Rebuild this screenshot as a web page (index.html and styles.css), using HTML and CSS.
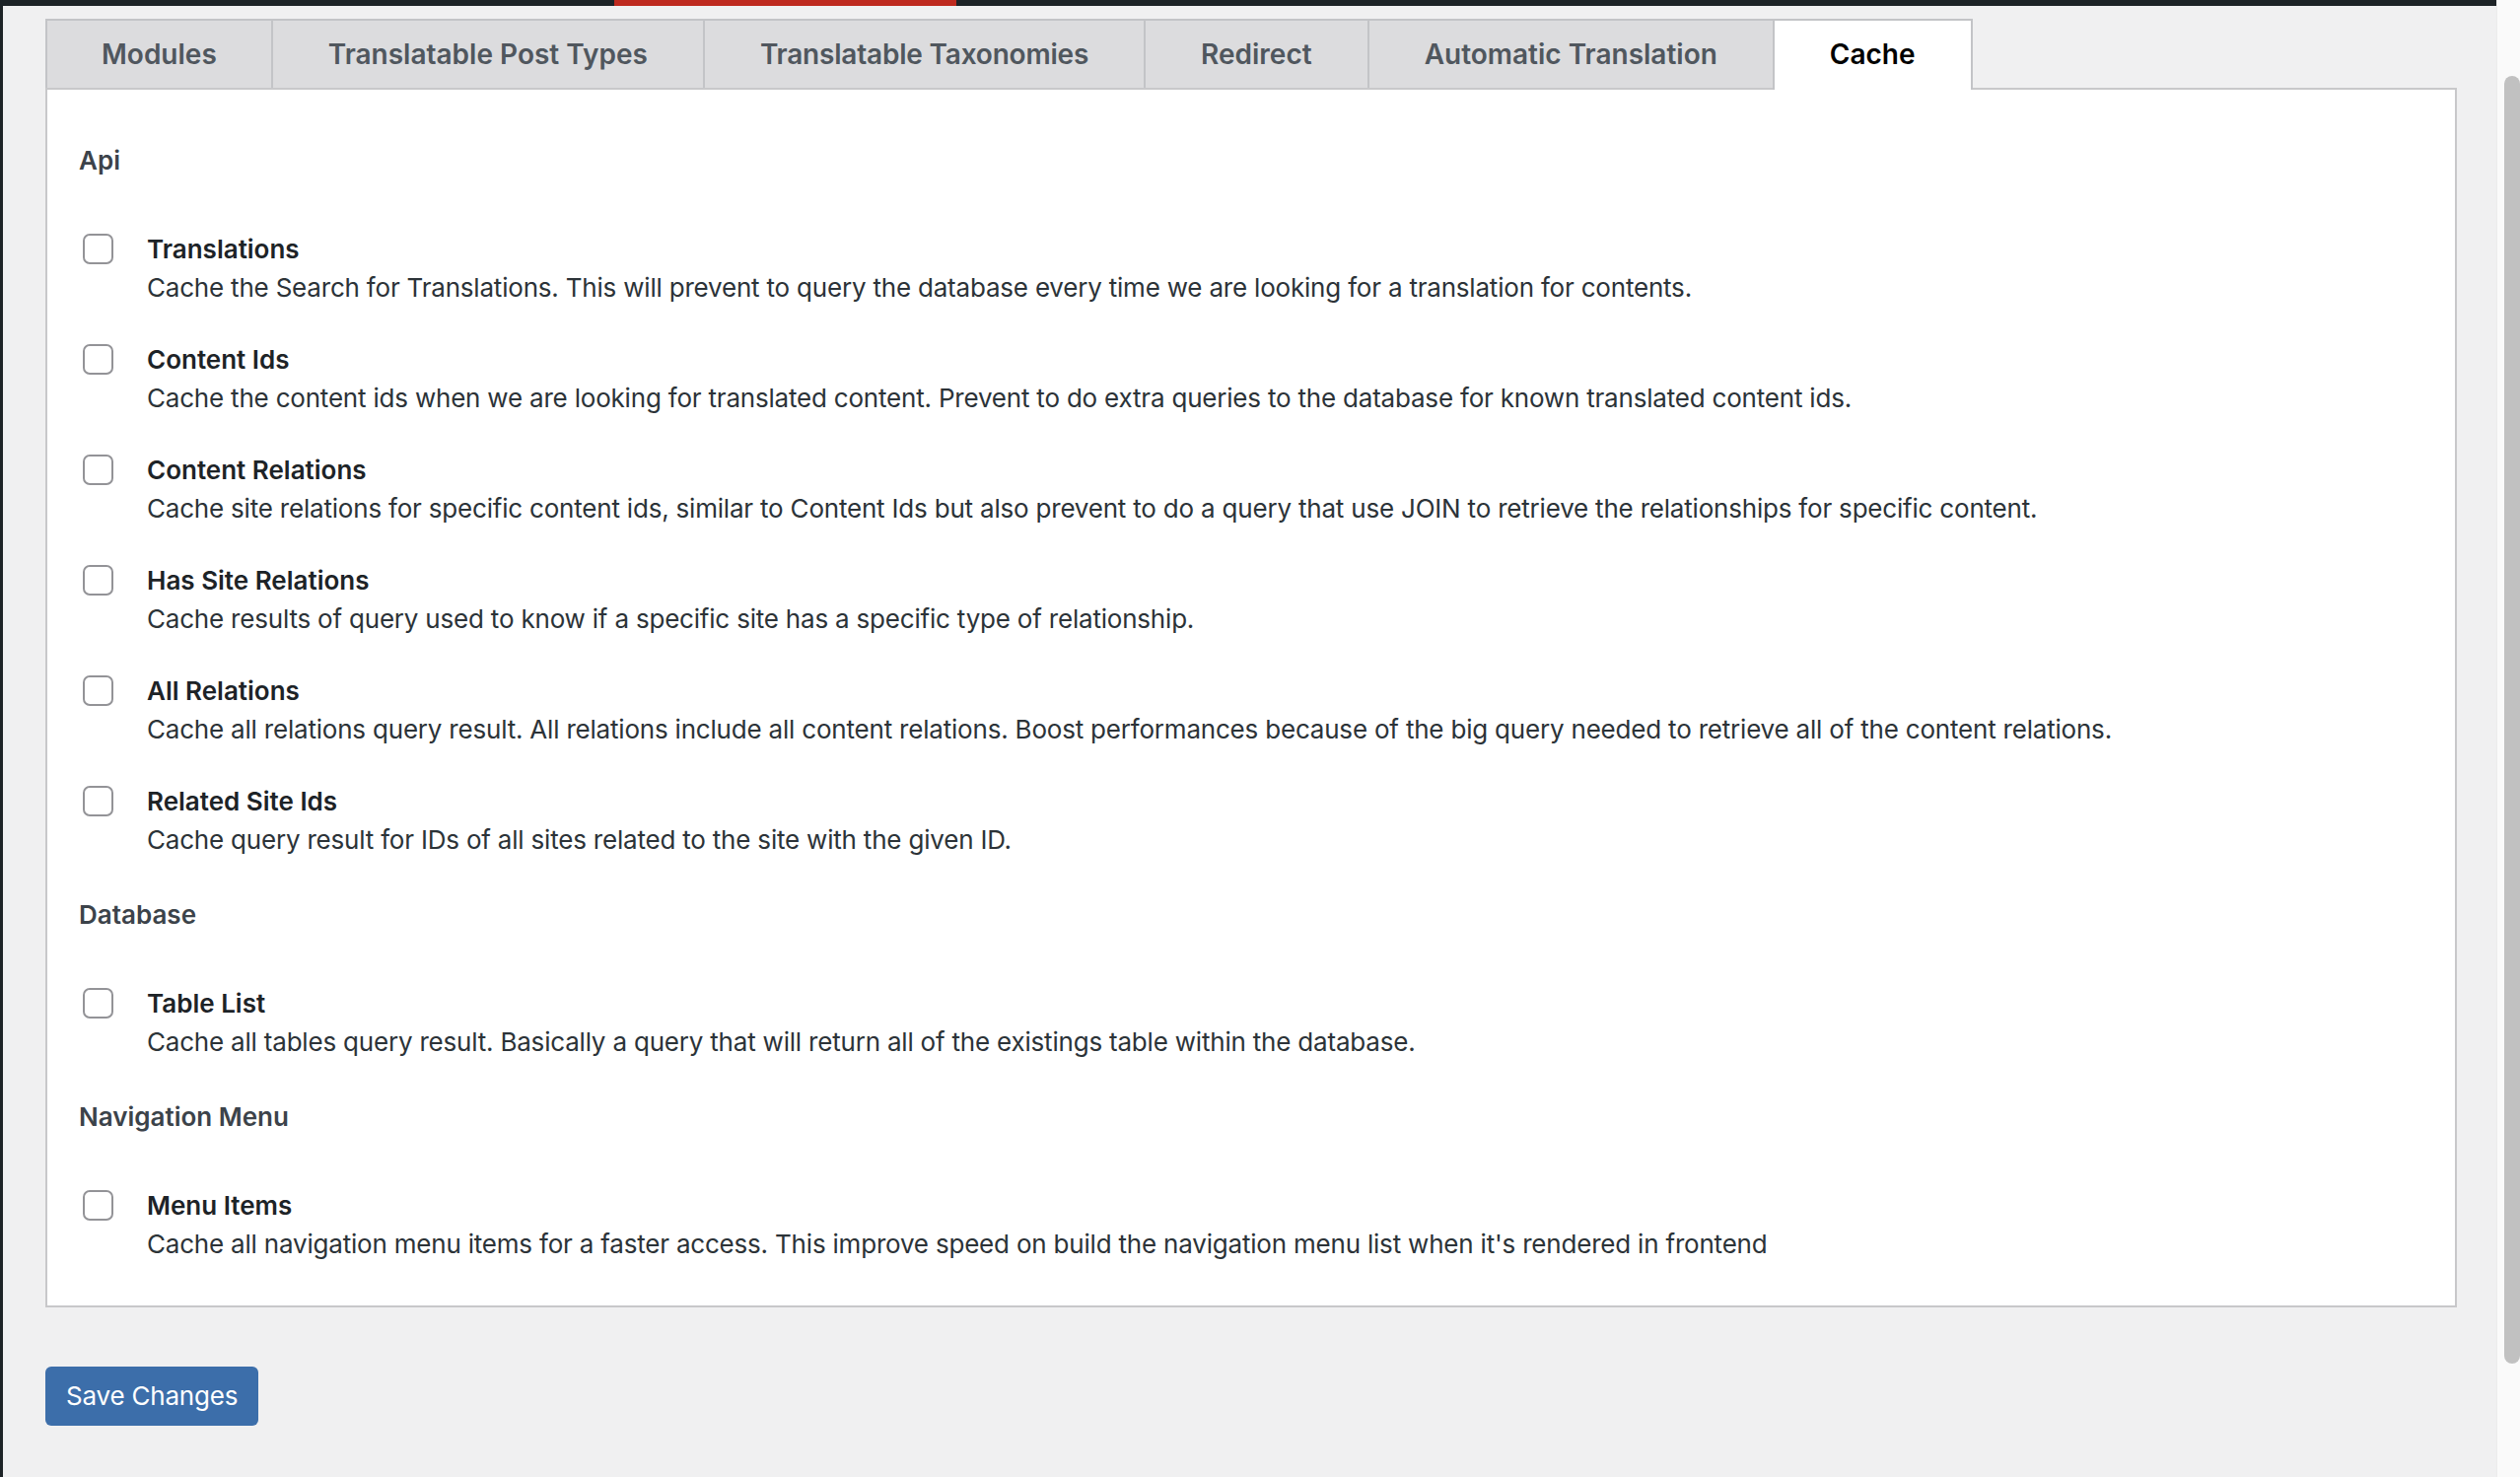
FILE: index.html
```html
<!DOCTYPE html>
<html lang="en">
<head>
<meta charset="utf-8">
<title>Cache Settings</title>
<link rel="stylesheet" href="styles.css">
</head>
<body>
<div class="app">
  <div class="adminbar"><div class="adminbar-active"></div></div>
  <div class="workspace">
    <div class="sidebar-edge"></div>
    <main class="content">
      <nav class="tabs">
        <a class="tab tab-first">Modules</a>
        <a class="tab">Translatable Post Types</a>
        <a class="tab tab-narrow">Translatable Taxonomies</a>
        <a class="tab">Redirect</a>
        <a class="tab">Automatic Translation</a>
        <a class="tab tab-active">Cache</a>
      </nav>
      <section class="panel">
        <div class="group">
          <h3 class="group-title">Api</h3>
          <label class="option">
            <input type="checkbox" class="check">
            <span class="option-text">
              <span class="option-name">Translations</span>
              <span class="option-desc">Cache the Search for Translations. This will prevent to query the database every time we are looking for a translation for contents.</span>
            </span>
          </label>
          <label class="option">
            <input type="checkbox" class="check">
            <span class="option-text">
              <span class="option-name">Content Ids</span>
              <span class="option-desc">Cache the content ids when we are looking for translated content. Prevent to do extra queries to the database for known translated content ids.</span>
            </span>
          </label>
          <label class="option">
            <input type="checkbox" class="check">
            <span class="option-text">
              <span class="option-name">Content Relations</span>
              <span class="option-desc">Cache site relations for specific content ids, similar to Content Ids but also prevent to do a query that use JOIN to retrieve the relationships for specific content.</span>
            </span>
          </label>
          <label class="option">
            <input type="checkbox" class="check">
            <span class="option-text">
              <span class="option-name">Has Site Relations</span>
              <span class="option-desc">Cache results of query used to know if a specific site has a specific type of relationship.</span>
            </span>
          </label>
          <label class="option">
            <input type="checkbox" class="check">
            <span class="option-text">
              <span class="option-name">All Relations</span>
              <span class="option-desc">Cache all relations query result. All relations include all content relations. Boost performances because of the big query needed to retrieve all of the content relations.</span>
            </span>
          </label>
          <label class="option">
            <input type="checkbox" class="check">
            <span class="option-text">
              <span class="option-name">Related Site Ids</span>
              <span class="option-desc">Cache query result for IDs of all sites related to the site with the given ID.</span>
            </span>
          </label>
        </div>
        <div class="group">
          <h3 class="group-title">Database</h3>
          <label class="option">
            <input type="checkbox" class="check">
            <span class="option-text">
              <span class="option-name">Table List</span>
              <span class="option-desc">Cache all tables query result. Basically a query that will return all of the existings table within the database.</span>
            </span>
          </label>
        </div>
        <div class="group">
          <h3 class="group-title">Navigation Menu</h3>
          <label class="option">
            <input type="checkbox" class="check">
            <span class="option-text">
              <span class="option-name">Menu Items</span>
              <span class="option-desc">Cache all navigation menu items for a faster access. This improve speed on build the navigation menu list when it's rendered in frontend</span>
            </span>
          </label>
        </div>
      </section>
      <div class="actions">
        <button class="button-primary" type="button">Save Changes</button>
      </div>
    </main>
  </div>
</div>
<div class="scrollbar"><div class="scrollbar-thumb"></div></div>
</body>
</html>
```

FILE: styles.css
```css
* { box-sizing: border-box; }

html, body {
  margin: 0;
  height: 100%;
}

body {
  display: flex;
  background: #f0f0f1;
  font-family: Inter, "Noto Sans", "Liberation Sans", sans-serif;
  overflow: hidden;
}

.app {
  flex: 1;
  min-width: 0;
  display: flex;
  flex-direction: column;
}

.adminbar {
  height: 6px;
  background: #1d2327;
  display: flex;
  flex-shrink: 0;
}

.adminbar-active {
  margin-left: 623px;
  width: 347px;
  background: #be2a1f;
}

.workspace {
  flex: 1;
  display: flex;
}

.sidebar-edge {
  width: 3px;
  background: #1d2327;
}

.content {
  flex: 1;
  padding: 13px 40px 0 43px;
}

.tabs {
  display: flex;
  align-items: flex-start;
  height: 70px;
}

.tab {
  height: 70px;
  padding: 0 56px;
  border: 2px solid #c3c4c7;
  border-bottom: none;
  margin-left: -2px;
  background: #dcdcde;
  color: #50575e;
  font-size: 28px;
  font-weight: 600;
  line-height: 68px;
  white-space: nowrap;
  cursor: pointer;
}

.tab-first {
  margin-left: 0;
  padding: 0 55px;
}

.tab-narrow {
  letter-spacing: -0.2px;
}

.tab-active {
  height: 72px;
  margin-bottom: -2px;
  background: #fff;
  color: #000;
  z-index: 1;
}

.panel {
  background: #fff;
  border: 2px solid #c8c8ca;
  padding: 52px 32px 43px;
}

.group + .group { margin-top: 37px; }

.group-title {
  margin: 0 0 51px;
  font-size: 26px;
  line-height: 39px;
  font-weight: 600;
  color: #3c434a;
}

.option {
  display: flex;
  align-items: flex-start;
}

.option + .option { margin-top: 34px; }

.check {
  appearance: none;
  -webkit-appearance: none;
  flex-shrink: 0;
  width: 31px;
  height: 31px;
  margin: 4px 34px 0 4px;
  border: 2px solid #939397;
  border-radius: 7px;
  background: #fff;
}

.option-text {
  display: flex;
  flex-direction: column;
  font-size: 26px;
  line-height: 39px;
}

.option-name {
  font-weight: 600;
  color: #1d2327;
}

.option-desc {
  color: #2c3338;
  letter-spacing: -0.2px;
}

.actions {
  margin-top: 60px;
}

.button-primary {
  height: 60px;
  padding: 0 21px;
  border: none;
  border-radius: 6px;
  background: #3c6eaa;
  color: #fff;
  font-family: inherit;
  font-size: 26px;
  line-height: 60px;
  letter-spacing: -0.2px;
  cursor: pointer;
}

.scrollbar {
  width: 24px;
  flex-shrink: 0;
  background: #fafafa;
  border-left: 1px solid #ececec;
  padding: 77px 0 0 7px;
}

.scrollbar-thumb {
  width: 16px;
  height: 1306px;
  border-radius: 8px;
  background: #c1c1c1;
}
```
